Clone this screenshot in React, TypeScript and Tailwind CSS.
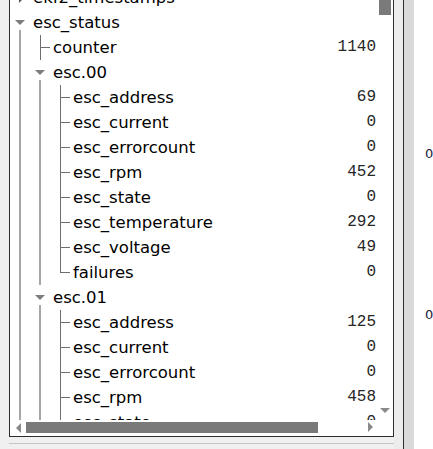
import React from "react";

type Col = "gray" | "none";
type Kind = "expanded" | "collapsed" | "tee" | "ell";

type Row = {
  label: string;
  level: number;
  kind: Kind;
  cols: Col[];
  value?: string;
};

const G2: Col[] = ["gray", "gray"];

const rows: Row[] = [
  { label: "ekf2_timestamps", level: 0, kind: "collapsed", cols: [] },
  { label: "esc_status", level: 0, kind: "expanded", cols: [] },
  { label: "counter", level: 1, kind: "tee", cols: ["gray"], value: "1140" },
  { label: "esc.00", level: 1, kind: "expanded", cols: ["gray"] },
  { label: "esc_address", level: 2, kind: "tee", cols: G2, value: "69" },
  { label: "esc_current", level: 2, kind: "tee", cols: G2, value: "0" },
  { label: "esc_errorcount", level: 2, kind: "tee", cols: G2, value: "0" },
  { label: "esc_rpm", level: 2, kind: "tee", cols: G2, value: "452" },
  { label: "esc_state", level: 2, kind: "tee", cols: G2, value: "0" },
  { label: "esc_temperature", level: 2, kind: "tee", cols: G2, value: "292" },
  { label: "esc_voltage", level: 2, kind: "tee", cols: G2, value: "49" },
  { label: "failures", level: 2, kind: "ell", cols: G2, value: "0" },
  { label: "esc.01", level: 1, kind: "expanded", cols: ["gray"] },
  { label: "esc_address", level: 2, kind: "tee", cols: G2, value: "125" },
  { label: "esc_current", level: 2, kind: "tee", cols: G2, value: "0" },
  { label: "esc_errorcount", level: 2, kind: "tee", cols: G2, value: "0" },
  { label: "esc_rpm", level: 2, kind: "tee", cols: G2, value: "458" },
  { label: "esc_state", level: 2, kind: "tee", cols: G2, value: "0" },
];

function GuideCell({ col }: { col: Col }) {
  return (
    <div className="w-[20px] h-full flex justify-center shrink-0">
      {col === "gray" && <div className="w-[2px] h-full bg-[#a6a6a6]" />}
    </div>
  );
}

function NodeCell({ kind }: { kind: Kind }) {
  if (kind === "expanded") {
    return (
      <div className="w-[20px] h-full flex flex-col items-center shrink-0">
        <div className="h-[10px]" />
        <div className="w-0 h-0 border-l-[5px] border-r-[5px] border-t-[5px] border-l-transparent border-r-transparent border-t-[#7c7c7c]" />
        <div className="h-[5px]" />
        <div className="w-[2px] flex-1 bg-[#a6a6a6]" />
      </div>
    );
  }
  if (kind === "collapsed") {
    return (
      <div className="w-[20px] h-full flex items-center justify-center shrink-0">
        <div className="w-0 h-0 ml-[2px] border-t-[5px] border-b-[5px] border-l-[5px] border-t-transparent border-b-transparent border-l-[#5a5a5a]" />
      </div>
    );
  }
  // tree connector for a leaf
  return (
    <div className="w-[20px] h-full pl-[10px] shrink-0 flex">
      {kind === "tee" ? (
        <div className="w-[10px] h-full border-l border-[#6e6e6e] flex items-center">
          <div className="w-full h-px bg-[#6e6e6e]" />
        </div>
      ) : (
        <div className="w-[10px] h-[13px] border-l border-b border-[#6e6e6e]" />
      )}
    </div>
  );
}

function TreeRow({ row }: { row: Row }) {
  return (
    <div className="h-[25px] flex items-stretch shrink-0">
      {row.cols.map((c, i) => (
        <GuideCell key={i} col={c} />
      ))}
      <NodeCell kind={row.kind} />
      <div className="ml-[3px] flex-1 flex items-center justify-between">
        <span className="font-['DejaVu_Sans',sans-serif] text-[16.5px] leading-[25px] text-black whitespace-nowrap">
          {row.label}
        </span>
        {row.value && (
          <span className="font-['Liberation_Mono',monospace] text-[16px] leading-[25px] text-[#262626] pr-[1px]">
            {row.value}
          </span>
        )}
      </div>
    </div>
  );
}

export default function App() {
  return (
    <div className="w-[433px] h-[449px] bg-[#f0f0f0] flex overflow-hidden">
      {/* Left: tree panel */}
      <div className="w-[394px] pl-[9px] flex flex-col shrink-0">
        <div className="w-[385px] h-[437px] bg-white border-l border-r border-b border-[#2e2e2e] flex flex-col">
          <div className="h-[420px] flex">
            <div className="w-[367px] h-full overflow-hidden">
              <div className="-mt-[15px] flex flex-col">
                {rows.map((r, i) => (
                  <TreeRow key={i} row={r} />
                ))}
              </div>
            </div>
            {/* vertical scrollbar */}
            <div className="w-[16px] h-full flex flex-col">
              <div className="ml-[2px] w-[12px] h-[15px] bg-[#7a7a7a]" />
              <div className="flex-1" />
              <div className="ml-[3px] w-0 h-0 border-l-[5px] border-r-[5px] border-t-[5px] border-l-transparent border-r-transparent border-t-[#8a8a8a]" />
              <div className="h-[7px]" />
            </div>
          </div>
          {/* horizontal scrollbar */}
          <div className="h-[16px] flex items-start">
            <div className="ml-[6px] mt-[3px] w-0 h-0 border-t-[5px] border-b-[5px] border-r-[5px] border-t-transparent border-b-transparent border-r-[#8a8a8a]" />
            <div className="ml-[5px] mt-[2px] w-[292px] h-[11px] bg-[#7a7a7a]" />
            <div className="flex-1" />
            <div className="mt-[2px] mr-[20px] w-0 h-0 border-t-[5px] border-b-[5px] border-l-[5px] border-t-transparent border-b-transparent border-l-[#8a8a8a]" />
          </div>
        </div>
        <div className="mt-[6px] w-[385px] h-px bg-[#c6c6c6]" />
      </div>

      {/* Right: splitter and neighbouring column */}
      <div className="w-[9px] h-full bg-[#ececec] shrink-0" />
      <div className="w-px h-full bg-[#2e2e2e] shrink-0" />
      <div className="w-[10px] h-full bg-[#dadada] shrink-0" />
      <div className="w-[19px] h-full bg-white shrink-0 flex flex-col pl-[11px] pt-[146px]">
        <span className="font-['DejaVu_Sans',sans-serif] text-[13px] leading-[15px] text-[#1a1a3a]">0</span>
        <span className="mt-[146px] font-['DejaVu_Sans',sans-serif] text-[13px] leading-[15px] text-[#1a1a3a]">0</span>
      </div>
    </div>
  );
}
